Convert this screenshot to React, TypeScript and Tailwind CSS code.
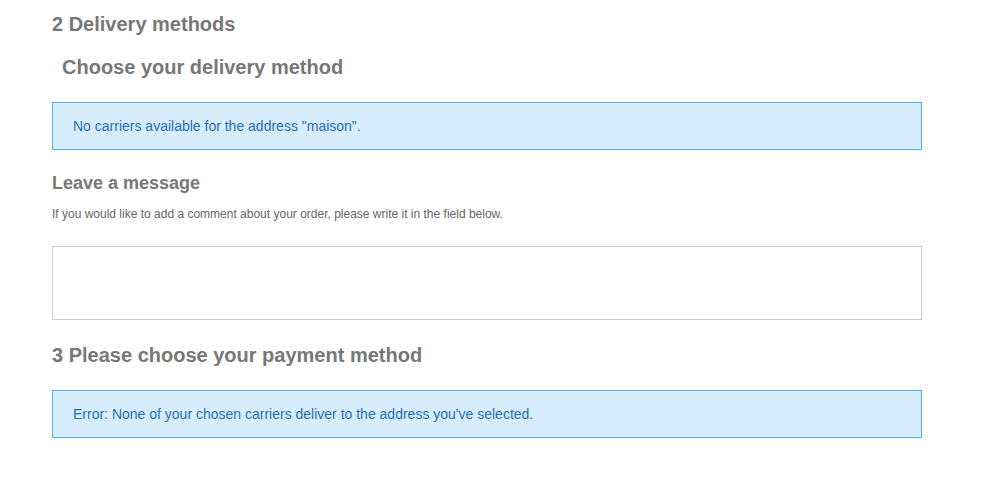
export default function App() {
  return (
    <div className="min-h-screen bg-white" style={{ fontFamily: "'Liberation Sans', Arial, sans-serif" }}>
      <div className="ml-[52px] w-[870px] pt-[12px]">
        <h2 className="text-[20px] font-bold leading-[24px] text-[#777777]">2 Delivery methods</h2>
        <h3 className="mt-[19px] pl-[10px] text-[20px] font-bold leading-[24px] text-[#777777]">
          Choose your delivery method
        </h3>

        <div className="mt-[23px] flex h-[48px] items-center border border-[#4eb0ee] bg-[#d8edfc] px-[20px] text-[14px] text-[#1f6db6]">
          No carriers available for the address "maison".
        </div>

        <h3 className="mt-[22px] text-[18px] font-bold leading-[22px] text-[#777777]">Leave a message</h3>
        <p className="mt-[13px] text-[12px] leading-[14px] text-[#666666]">
          If you would like to add a comment about your order, please write it in the field below.
        </p>

        <textarea className="mt-[25px] block h-[74px] w-full resize-none border border-[#cccccc] bg-white outline-none" />

        <h2 className="mt-[23px] text-[20px] font-bold leading-[24px] text-[#777777]">
          3 Please choose your payment method
        </h2>

        <div className="mt-[23px] flex h-[48px] items-center border border-[#4eb0ee] bg-[#d8edfc] px-[20px] text-[14px] text-[#1f6db6]">
          Error: None of your chosen carriers deliver to the address you've selected.
        </div>
      </div>
    </div>
  );
}
